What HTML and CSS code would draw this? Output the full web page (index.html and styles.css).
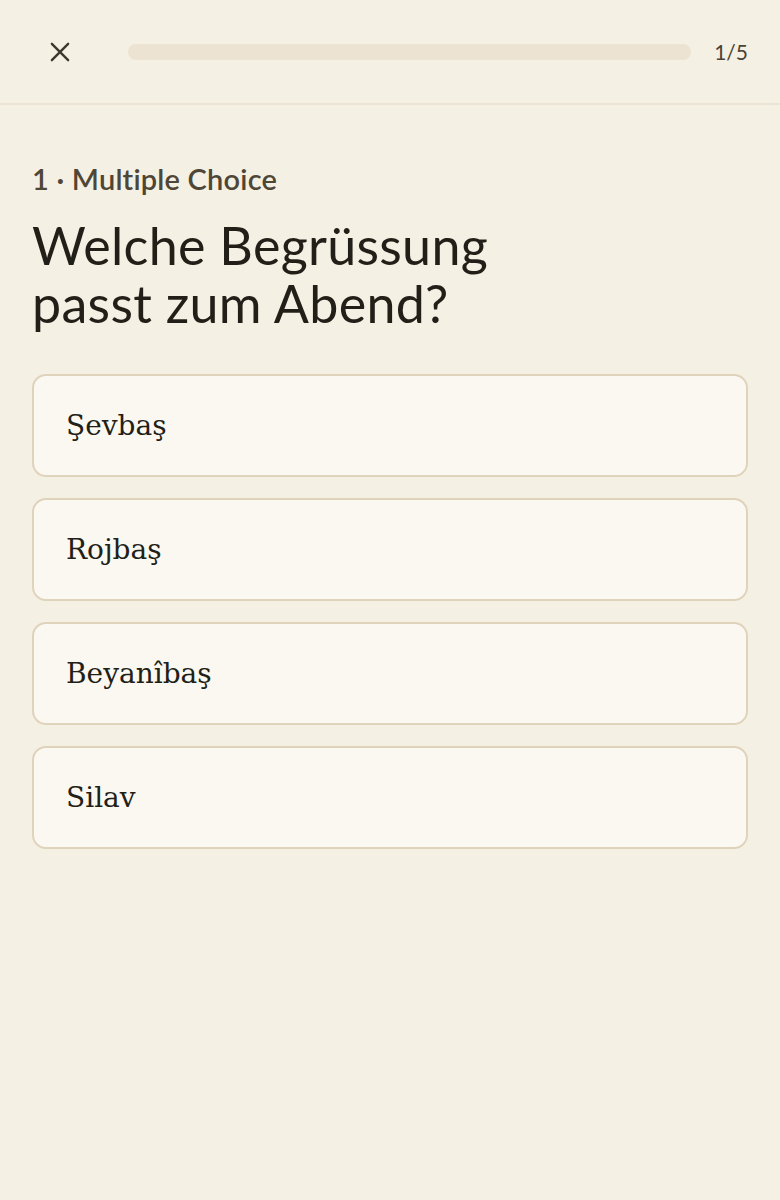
FILE: index.html
```html
<!DOCTYPE html>
<html lang="de">
  <head>
    <meta charset="UTF-8" />
    <meta name="viewport" content="width=device-width, initial-scale=1.0" />
    <title>Quiz</title>
    <link rel="stylesheet" href="styles.css">
  </head>
  <body>
    <div class="topbar">
      <button class="close-btn" aria-label="Schliessen">
        <svg width="26" height="26" viewBox="0 0 24 24" fill="none" stroke="currentColor" stroke-width="2.2" stroke-linecap="round">
          <path d="M4.5 4.5 L19.5 19.5 M19.5 4.5 L4.5 19.5" />
        </svg>
      </button>
      <div class="progress"><div class="progress-fill" style="width: 0%"></div></div>
      <div class="progress-count">1/5</div>
    </div>

    <div class="content">
      <div class="q-label">1 · Multiple Choice</div>
      <h1 class="q-title">Welche Begrüssung<br>passt zum Abend?</h1>

      <div class="options">
        <button class="option">Şevbaş</button>
        <button class="option">Rojbaş</button>
        <button class="option">Beyanîbaş</button>
        <button class="option">Silav</button>
      </div>
    </div>
  </body>
</html>
```

FILE: styles.css
```css
* {
  margin: 0;
  padding: 0;
  box-sizing: border-box;
}

body {
  background: #f5f0e4;
  font-family: "Lato", "Noto Sans", sans-serif;
  font-variant-ligatures: none;
  color: #221f18;
  min-height: 100vh;
}

.topbar {
  display: flex;
  align-items: center;
  height: 105px;
  padding: 0 32px 0 34px;
  border-bottom: 2px solid #ebe3d4;
}

.close-btn {
  background: none;
  border: none;
  color: #3d382e;
  width: 52px;
  height: 52px;
  display: flex;
  align-items: center;
  justify-content: center;
  cursor: pointer;
}

.progress {
  flex: 1;
  height: 16px;
  margin: 0 23px 0 42px;
  background: #ede3d2;
  border-radius: 8px;
  overflow: hidden;
}

.progress-fill {
  height: 100%;
  background: #8a6d3b;
}

.progress-count {
  font-size: 21px;
  color: #4a4336;
}

.content {
  padding: 56px 32px 0;
}

.q-label {
  font-size: 29px;
  font-weight: 600;
  letter-spacing: 0.2px;
  color: #4f4636;
  margin-bottom: 20px;
}

.q-title {
  font-size: 52px;
  font-weight: 400;
  line-height: 58px;
  letter-spacing: 0.3px;
  color: #221f18;
  margin-bottom: 42px;
}

.options {
  display: flex;
  flex-direction: column;
  gap: 21px;
}

.option {
  height: 103px;
  background: #fbf8f1;
  border: 2px solid #e0d3bc;
  border-radius: 14px;
  padding: 0 32px;
  text-align: left;
  font-family: "DejaVu Serif", serif;
  font-size: 28px;
  color: #221f18;
  cursor: pointer;
}
```
